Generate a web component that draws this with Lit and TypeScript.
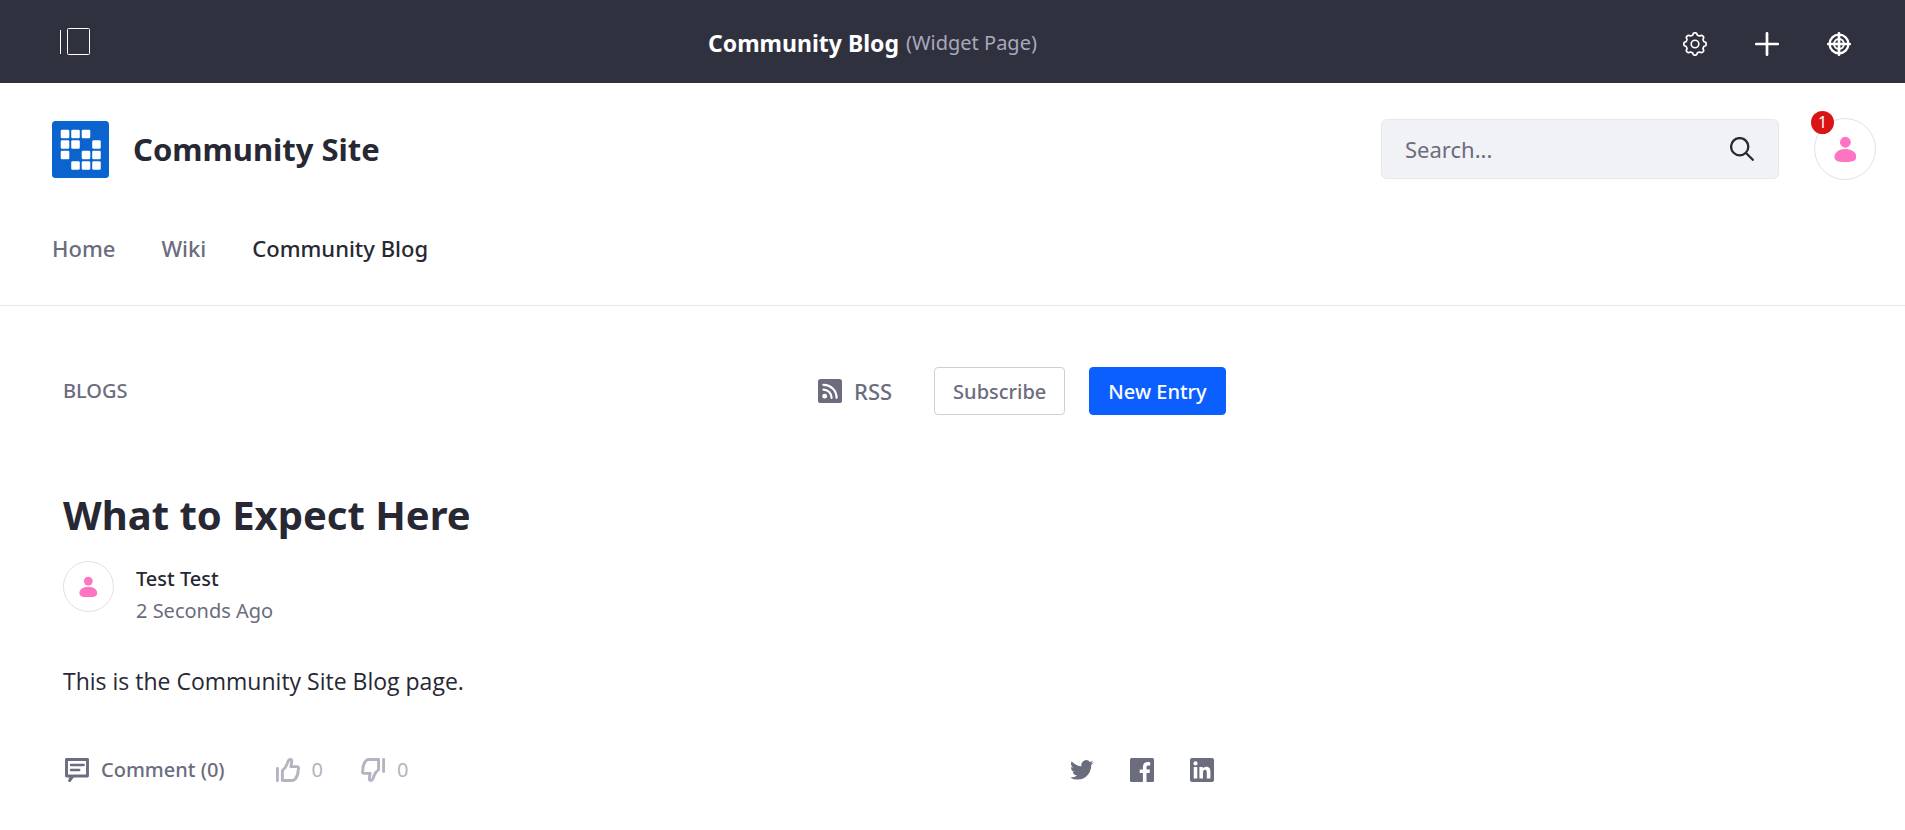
import { LitElement, html, css, svg } from "lit";
import { customElement, property } from "lit/decorators.js";

// Outline of a cog with eight soft teeth, centred in a 24 unit box.
const cogPath = (() => {
  const points: string[] = [];
  for (let i = 0; i < 128; i++) {
    const angle = (i / 128) * Math.PI * 2;
    const wave = Math.tanh(2.2 * Math.cos(8 * angle));
    const r = 10.1 + wave * 1.05;
    points.push(`${(12 + r * Math.cos(angle)).toFixed(2)} ${(12 + r * Math.sin(angle)).toFixed(2)}`);
  }
  return `M${points.join("L")}Z`;
})();

const thumb = svg`
  <g fill="none" stroke="currentColor" stroke-width="2.9" stroke-linejoin="round" stroke-linecap="round">
    <path d="M1.400 10.400V22.600"/>
    <path d="M6.400 22.500V12.400C9 10.600 10.300 8.400 11.200 5.600C11.800 3.400 12.800 1.500 14.400 1.500C16.400 1.800 15.800 4.400 14.800 8.600H21C22.600 8.800 23 10 22.200 11.400C22.300 15 21.200 18.600 19.400 20.900C18.500 22.100 17.500 22.500 16.200 22.500Z"/>
  </g>`;

const icons: Record<string, unknown> = {
  cog: svg`<g fill="none" stroke="currentColor"><path d=${cogPath} stroke-width="1.7"/><circle cx="12" cy="12" r="3.8" stroke-width="1.6"/></g>`,
  plus: svg`<path d="M12 1.300V22.700M1.300 12H22.700" fill="none" stroke="currentColor" stroke-width="2.700" stroke-linecap="round"/>`,
  target: svg`<g fill="none" stroke="currentColor" stroke-linecap="round"><circle cx="12" cy="12" r="9.400" stroke-width="2.300"/><circle cx="12" cy="12" r="4.900" stroke-width="2"/><path d="M12 1.300V22.700M1.300 12H22.700" stroke-width="2.700"/></g>`,
  search: svg`<g fill="none" stroke="currentColor" stroke-width="2.3" stroke-linecap="round"><circle cx="9.7" cy="9.7" r="8.6"/><path d="M16 16L22.8 22.8"/></g>`,
  rss: svg`<rect width="24" height="24" rx="2.6" fill="currentColor"/><circle cx="6.7" cy="17.2" r="2.4" fill="#fff"/><path d="M5.4 10.6A8.2 8.2 0 0 1 13.6 18.8M5.4 5.8A13 13 0 0 1 18.6 18.8" fill="none" stroke="#fff" stroke-width="2.2" stroke-linecap="round"/>`,
  comment: svg`<g fill="none" stroke="currentColor" stroke-linecap="round" stroke-linejoin="round"><path d="M1.5 1.5H22.5V18H8L4.6 22.6L6.6 18H1.5Z" stroke-width="2.9"/><path d="M6 7H18.6M6 12H14.2" stroke-width="2.5"/></g>`,
  up: thumb,
  down: svg`<g transform="rotate(180 12 12)">${thumb}</g>`,
  twitter: svg`<path fill="currentColor" d="M23.6 4.6a9.7 9.7 0 0 1-2.8.8 4.9 4.9 0 0 0 2.1-2.7 9.8 9.8 0 0 1-3 1.2 4.8 4.8 0 0 0-8.3 4.4A13.7 13.7 0 0 1 1.700 3.200a4.800 4.800 0 0 0 1.500 6.500 4.800 4.800 0 0 1-2.200-.6v.1a4.800 4.800 0 0 0 3.900 4.700 4.900 4.900 0 0 1-2.200.1 4.800 4.800 0 0 0 4.500 3.400A9.700 9.700 0 0 1 0 19.400a13.700 13.700 0 0 0 7.400 2.200c9 0 13.800-7.500 13.800-13.900v-.6a9.900 9.900 0 0 0 2.400-2.500z"/>`,
  facebook: svg`<rect width="24" height="24" rx="1.5" fill="currentColor"/><path fill="#fff" d="M12.900 24V15.100H9.700V11.500H12.900V8.900C12.900 5.700 14.800 4 17.600 4C18.900 4 19.600 4.100 20.200 4.200V7.400H18.200C16.900 7.400 16.500 8.100 16.500 9.200V11.500H20L19.500 15.100H16.500V24Z"/>`,
  linkedin: svg`<rect width="24" height="24" rx="2" fill="currentColor"/><g fill="#fff"><circle cx="5.500" cy="5.400" r="2.100"/><path d="M3.700 9H7.300V20.400H3.700ZM9.400 9H12.800V10.600C13.400 9.500 14.700 8.700 16.300 8.700C19.700 8.700 20.400 11 20.400 14.100V20.400H16.800V14.800C16.800 13.400 16.700 11.800 15 11.800C13.300 11.800 13 13.200 13 14.700V20.400H9.400Z"/></g>`,
};

@customElement("ui-icon")
class UiIcon extends LitElement {
  @property() name = "";
  static styles = css`
    :host { display: block; width: 24px; height: 24px; flex: none; }
    svg { display: block; width: 100%; height: 100%; }
  `;
  render() {
    return html`<svg viewBox="0 0 24 24" aria-hidden="true">${icons[this.name]}</svg>`;
  }
}

@customElement("user-avatar")
class UserAvatar extends LitElement {
  static styles = css`
    :host {
      display: flex; align-items: center; justify-content: center; flex: none;
      box-sizing: border-box; width: 62px; height: 62px;
      border: 1px solid #e0e0e8; border-radius: 50%; background: #fff; color: #ff73c3;
    }
    svg { display: block; width: 38%; }
  `;
  render() {
    return html`<svg viewBox="0 0 24 28" fill="currentColor" aria-hidden="true">
      <circle cx="12" cy="6.600" r="5.700"/>
      <path d="M12 13.800C18.500 13.800 23.500 17.500 23.500 21.800C23.500 26.300 19.500 27.500 12 27.500S.5 26.300 .5 21.800C.5 17.500 5.500 13.800 12 13.800Z"/>
    </svg>`;
  }
}

@customElement("app-root")
class AppRoot extends LitElement {
  static styles = css`
    :host {
      display: block; min-height: 100vh; background: #fff; color: #272833;
      font-family: "Noto Sans", "Open Sans", sans-serif; font-size: 20px; line-height: 32px;
    }
    * { box-sizing: border-box; }
    a { color: inherit; text-decoration: none; }
    button { font: inherit; color: inherit; background: none; border: 0; padding: 0; margin: 0; cursor: pointer; }
    h1, h2, p { margin: 0; }
    .control { display: flex; align-items: center; height: 83px; padding: 0 30px 0 60px; background: #30313f; color: #fff; }
    .panel { display: block; width: 30px; height: 27px; }
    .where { flex: 1; display: flex; justify-content: center; align-items: center; gap: 7px; padding: 2px 4px 0 0; }
    .where strong { font-size: 23px; font-weight: 700; }
    .where span { color: #a7a9bc; }
    .tools { display: flex; padding-top: 5px; }
    .tools button { width: 72px; display: flex; justify-content: center; }
    .site { padding: 35px 29px 41px 52px; border-bottom: 1px solid #e7e7ed; }
    .brandrow { display: flex; align-items: center; justify-content: space-between; margin-bottom: 52px; }
    .brand { display: flex; align-items: center; gap: 24px; font-size: 31px; font-weight: 700; }
    .logo { display: block; width: 57px; height: 57px; }
    .right { display: flex; align-items: center; gap: 35px; }
    .search { display: flex; align-items: center; width: 398px; height: 60px; padding: 0 24px 0 23px; border: 1px solid #e7e7ed; border-radius: 6px; background: #f1f2f5; }
    .search input { flex: 1; min-width: 0; border: 0; padding: 0; outline: 0; background: none; font: inherit; font-size: 22px; color: #272833; }
    .search input::placeholder { color: #6b6c7e; opacity: 1; }
    .user { position: relative; }
    .badge { position: absolute; left: -3px; top: -7px; width: 23px; height: 23px; border-radius: 50%; background: #da1414; color: #fff; font-size: 16px; line-height: 23px; text-align: center; }
    .nav { display: flex; gap: 46px; font-size: 22px; font-weight: 500; color: #6b6c7e; }
    .nav .on { color: #272833; }
    .page { display: grid; grid-template-columns: 2fr 1fr; padding: 61px 52px 40px; }
    .blog { padding: 0 27px 0 11px; }
    .bar { display: flex; align-items: center; gap: 24px; color: #6b6c7e; font-weight: 500; }
    .bar h2 { font-size: 20px; font-weight: 500; margin-right: auto; }
    .rss { display: flex; align-items: center; gap: 12px; font-size: 22px; margin-right: 18px; }
    .btn { height: 48px; padding: 2px 18px 0; border: 1px solid #cdced9; border-radius: 4px; background: #fff; }
    .primary { border-color: #0b5fff; background: #0b5fff; color: #fff; }
    .title { margin-top: 76px; font-size: 40px; line-height: 48px; font-weight: 700; }
    .author { display: flex; gap: 22px; margin-top: 22px; }
    .author user-avatar { width: 51px; height: 51px; }
    .by { padding-top: 2px; }
    .name { display: block; font-weight: 500; }
    .when { color: #6b6c7e; }
    .text { margin-top: 36px; font-family: "Open Sans", sans-serif; font-size: 23px; line-height: 36px; }
    .foot { display: flex; align-items: center; margin-top: 55px; padding: 0 12px 0 2px; color: #6b6c7e; }
    .foot a, .foot button { display: flex; align-items: center; gap: 12px; }
    .foot .say { font-weight: 500; margin-right: 51px; }
    .rate { display: flex; gap: 38px; color: #b3b4c0; }
    .share { display: flex; gap: 36px; margin-left: auto; }
  `;

  render() {
    const cells = [[0, 0], [1, 0], [2, 0], [0, 1], [1, 1], [3, 1], [0, 2], [2, 2], [3, 2], [1, 3], [2, 3], [3, 3]];
    return html`
      <header class="control">
        <button aria-label="Product menu">
          <svg class="panel" viewBox="0 0 30 27" fill="none" stroke="#fff"><path d="M.5 2V26"/><rect x="7.500" y=".5" width="22" height="26" rx="1"/></svg>
        </button>
        <div class="where"><strong>Community Blog</strong><span>(Widget Page)</span></div>
        <div class="tools">
          <button aria-label="Configure page"><ui-icon name="cog"></ui-icon></button>
          <button aria-label="Add"><ui-icon name="plus"></ui-icon></button>
          <button aria-label="Simulation"><ui-icon name="target"></ui-icon></button>
        </div>
      </header>
      <div class="site">
        <div class="brandrow">
          <a class="brand" href="#">
            <svg class="logo" viewBox="0 0 56 56" aria-hidden="true">
              <rect width="56" height="56" rx="3.500" fill="#0b63ce"/>
              ${cells.map(([x, y]) => svg`<rect x=${8.6 + x * 10.3} y=${8.6 + y * 10.3} width="8.400" height="8.400" rx="1.300" fill="#fff"/>`)}
            </svg>
            <span>Community Site</span>
          </a>
          <div class="right">
            <form class="search" role="search">
              <input type="text" placeholder="Search..." aria-label="Search">
              <button type="button" aria-label="Submit search"><ui-icon name="search"></ui-icon></button>
            </form>
            <button class="user" aria-label="User menu"><user-avatar></user-avatar><span class="badge">1</span></button>
          </div>
        </div>
        <nav class="nav"><a href="#">Home</a><a href="#">Wiki</a><a class="on" href="#" aria-current="page">Community Blog</a></nav>
      </div>
      <main class="page">
        <section class="blog">
          <div class="bar">
            <h2>BLOGS</h2>
            <a class="rss" href="#"><ui-icon name="rss"></ui-icon>RSS</a>
            <button class="btn">Subscribe</button>
            <button class="btn primary">New Entry</button>
          </div>
          <article>
            <h1 class="title">What to Expect Here</h1>
            <div class="author">
              <user-avatar></user-avatar>
              <div class="by"><a class="name" href="#">Test Test</a><div class="when">2 Seconds Ago</div></div>
            </div>
            <p class="text">This is the Community Site Blog page.</p>
            <div class="foot">
              <a class="say" href="#"><ui-icon name="comment"></ui-icon>Comment (0)</a>
              <div class="rate">
                <button aria-label="Like"><ui-icon name="up"></ui-icon>0</button>
                <button aria-label="Dislike"><ui-icon name="down"></ui-icon>0</button>
              </div>
              <div class="share">
                <a href="#" aria-label="Twitter"><ui-icon name="twitter"></ui-icon></a>
                <a href="#" aria-label="Facebook"><ui-icon name="facebook"></ui-icon></a>
                <a href="#" aria-label="LinkedIn"><ui-icon name="linkedin"></ui-icon></a>
              </div>
            </div>
          </article>
        </section>
      </main>
    `;
  }
}
